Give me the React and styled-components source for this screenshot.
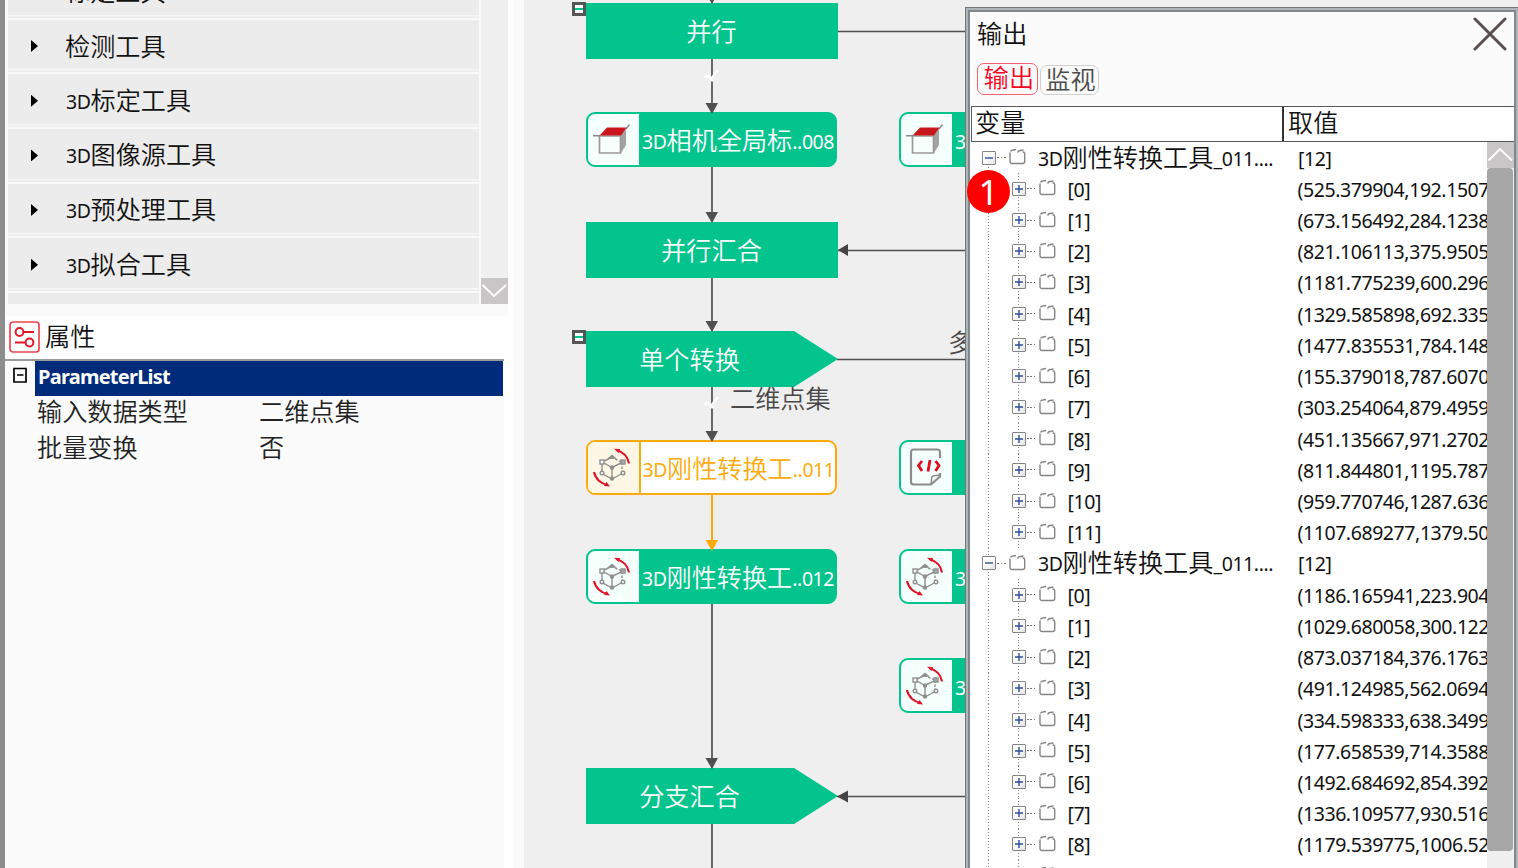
import React from "react";
import styled, { createGlobalStyle, css } from "styled-components";

const GREEN = "#03c48d";
const AMBER = "#fdab0c";
const LINE = "#505050";

const GlobalStyle = createGlobalStyle`
  * { box-sizing: border-box; }
  body {
    margin: 0;
    overflow: hidden;
    font-family: "Noto Sans", "Noto Sans CJK SC", sans-serif;
    color: #111;
  }
`;

const Page = styled.div`
  position: relative;
  display: flex;
  width: 1518px;
  height: 868px;
  overflow: hidden;
  background: #fff;
`;

/* ---------- text ---------- */

const TextLine = styled.span`
  display: block;
  margin: ${(p) => (p.$pure ? "-3px 0 0 -1px" : "-4px 0 0")};
  font-family: "Noto Sans CJK SC", sans-serif;
  font-size: 25.15px;
  font-weight: 350;
  line-height: 30px;
  white-space: nowrap;
`;

const Latin = styled.span`
  font-family: "Noto Sans", sans-serif;
  font-size: 19.5px;
  font-weight: 400;
  letter-spacing: -0.42px;
`;

const InlineLatin = styled(Latin)`
  vertical-align: 1px;
  line-height: 1;
`;

function Mixed({ children }) {
  const parts = children.split(/([\x20-\x7e]+)/).filter(Boolean);
  const isLatin = (p) => /^[\x20-\x7e]/.test(p);
  return (
    <TextLine $pure={!parts.some(isLatin)}>
      {parts.map((p, i) => (isLatin(p) ? <InlineLatin key={i}>{p}</InlineLatin> : p))}
    </TextLine>
  );
}

/* ---------- left side ---------- */

const Side = styled.aside`
  display: flex;
  flex-direction: column;
  width: 513px;
  height: 868px;
  border-left: 5px solid #8d8d8d;
  background: #fff;
`;

const ToolArea = styled.div`
  display: flex;
  width: 503px;
  height: 316px;
  padding: 0 0 12px 3px;
  background: #fafafa;
`;

const ToolList = styled.ul`
  display: flex;
  flex-direction: column;
  justify-content: flex-end;
  width: 471px;
  height: 304px;
  margin: 0;
  padding: 0;
  list-style: none;
  overflow: hidden;
  background: #ececec;
`;

const ToolItem = styled.li`
  display: flex;
  flex: none;
  align-items: center;
  height: 54.65px;
  padding: 0 0 0 23px;
  gap: 28px;
  border-bottom: 2px solid #f9f9f9;
  box-shadow: inset 0 -1.5px 0 #ececec, inset 0 -3px 0 #f7f7f7;
`;

const ListTail = styled.li`
  flex: none;
  height: 11px;
`;

const Caret = styled.i`
  width: 7px;
  height: 12px;
  background: #000;
  clip-path: polygon(0 0, 100% 50%, 0 100%);
`;

const ToolScroll = styled.div`
  display: flex;
  flex-direction: column;
  justify-content: flex-end;
  width: 27px;
  margin-left: 2px;
  background: #f0f0f0;
`;

const ScrollButton = styled.div`
  display: grid;
  place-items: center;
  width: 27px;
  height: 26px;
  background: #c8c6c7;
`;

const PropTitle = styled.header`
  display: flex;
  align-items: center;
  height: 43px;
  padding: 0 0 2px 4px;
  gap: 6px;
`;

const PropGrid = styled.section`
  flex: 1;
  width: 499px;
  padding-left: 2px;
  border-top: 2px solid #9a9a9a;
  background: #fbfbfb;
`;

const GroupRow = styled.div`
  display: flex;
  height: 35px;
`;

const GroupToggle = styled.div`
  width: 28px;
  padding: 5px 0 0 6px;
`;

const GroupName = styled.div`
  width: 468px;
  height: 35px;
  padding-left: 3px;
  background: #002b7a;
  color: #fff;
  font-size: 20px;
  font-weight: 700;
  letter-spacing: -0.75px;
  line-height: 32px;
`;

const PropRow = styled.div`
  display: grid;
  grid-template-columns: 222px 1fr;
  align-items: center;
  height: 35.5px;
  padding: 0 0 4px 31px;
  color: #222;
`;

const Gutter = styled.div`
  width: 11px;
  background: #fafafa;
`;

/* ---------- flow chart ---------- */

const Canvas = styled.main`
  position: relative;
  flex: 1;
  overflow: hidden;
  background: #efefef;
`;

const Edges = styled.svg`
  position: absolute;
  inset: 0;
`;

const placed = css`
  position: absolute;
  left: ${(p) => p.$x}px;
  top: ${(p) => p.$y}px;
`;

const Block = styled.div`
  ${placed}
  display: grid;
  place-items: center;
  width: 252px;
  height: 56px;
  padding: 1px ${(p) => (p.$arrow ? 44 : 0)}px 0 0;
  background: ${GREEN};
  color: #fff;
  clip-path: ${(p) => (p.$arrow ? "polygon(0 0, 208px 0, 100% 50%, 208px 100%, 0 100%)" : "none")};
`;

const Node = styled.div`
  ${placed}
  display: flex;
  width: 251px;
  height: 55px;
  overflow: hidden;
  border: 2px solid ${(p) => (p.$active ? AMBER : GREEN)};
  border-radius: 9px;
  background: ${(p) => (p.$active ? "#fff" : GREEN)};
  color: ${(p) => (p.$active ? AMBER : "#fff")};
`;

const NodeIcon = styled.div`
  display: grid;
  flex: none;
  place-items: center;
  width: ${(p) => (p.$active ? 53 : 51)}px;
  padding-right: 3px;
  border-right: ${(p) => (p.$active ? `2px solid ${AMBER}` : "none")};
  background: ${(p) => (p.$active ? "#fff7e6" : "#f5fffc")};
`;

const NodeLabel = styled.div`
  display: flex;
  align-items: center;
  padding: 3px 0 0 ${(p) => (p.$active ? 1.5 : 3)}px;
`;

const EdgeLabel = styled.div`
  ${placed}
  color: #484848;
`;

const Collapse = styled.div`
  ${placed}
  width: 14px;
  height: 14px;
  border: 3px solid #555;
  background: linear-gradient(#fff 3px, ${GREEN} 3px, ${GREEN} 5px, #fff 5px);
`;

/* ---------- output window ---------- */

const Window = styled.section`
  position: absolute;
  left: 965px;
  top: 7px;
  display: flex;
  flex-direction: column;
  width: 553px;
  height: 880px;
  padding: 5px 4px 0 6px;
  background: #fff;
  box-shadow: inset 1px 1px 0 #737777, inset 3px 3px 0 #aeb6b9, inset -2px 0 0 #aeb6b9,
    inset 5px 5px 0 #7f888b, inset -4px 0 0 #7f888b;
`;

const WindowHead = styled.header`
  display: flex;
  flex-direction: column;
  height: 94px;
  padding-left: 6px;
  background: #fbfbfb;
`;

const TitleBar = styled.div`
  display: flex;
  justify-content: space-between;
  height: 50px;
  padding: 5px 7px 0 1px;
`;

const WindowTitle = styled.div`
  padding-top: 3px;
`;

const Tabs = styled.div`
  display: flex;
  align-items: flex-end;
  height: 33px;
  gap: 2px;
`;

const Tab = styled.button`
  display: grid;
  place-items: center;
  width: ${(p) => (p.$on ? 61 : 59)}px;
  height: ${(p) => (p.$on ? 32 : 30)}px;
  padding: 0 0 ${(p) => (p.$on ? 3 : 8)}px ${(p) => (p.$on ? 4 : 3)}px;
  border: 1.5px solid ${(p) => (p.$on ? "#f2626d" : "#cfcfcf")};
  border-radius: 7px;
  background: transparent;
  color: ${(p) => (p.$on ? "#f8051f" : "#4c4c4c")};
`;

const TableHead = styled.div`
  display: grid;
  grid-template-columns: 312px 1fr;
  height: 36px;
  border: solid #585858;
  border-width: 1.5px 0 1.5px 1px;
`;

const HeadCell = styled.div`
  padding: 2px 0 0 ${(p) => (p.$divider ? 4 : 5)}px;
  border-right: ${(p) => (p.$divider ? "2px solid #333" : "none")};
`;

const TableBody = styled.div`
  display: flex;
  height: 740px;
`;

const Rows = styled.div`
  width: 516px;
  overflow: hidden;
`;

const Row = styled.div`
  display: flex;
  align-items: center;
  height: 31.22px;
  white-space: nowrap;
`;

const guide = css`
  background: repeating-linear-gradient(#888 0 1px, transparent 1px 3px) 17px 0 / 1px 100% no-repeat;
`;

const Indent = styled.div`
  flex: none;
  align-self: stretch;
  width: 30px;
  ${guide}
`;

const Branch = styled.div`
  display: flex;
  flex: none;
  align-items: center;
  align-self: stretch;
  width: ${(p) => (p.$root ? 67 : 66.5)}px;
  padding-left: 10.5px;
  ${guide}
  ${(p) => p.$first && "background-position: 17px 16px;"}
`;

const Expander = styled.i`
  display: grid;
  flex: none;
  place-items: center;
  width: 14px;
  height: 14px;
  border: 1px solid #858585;
  border-radius: 1px;
  background: linear-gradient(135deg, #fff 40%, #e2e2e2);
`;

const Dots = styled.i`
  width: 9px;
  height: 1px;
  margin: 0 3.5px 0 1px;
  background: repeating-linear-gradient(90deg, #777 0 1.5px, transparent 1.5px 3.5px);
`;

const NameCell = styled.div`
  flex: none;
  width: ${(p) => (p.$root ? 260 : 230)}px;
`;

const ItemText = styled(Latin)`
  display: block;
  padding-top: 2px;
  line-height: 30px;
`;

const ScrollTrack = styled.div`
  width: 27px;
  background: #f0f0f0;
`;

const Thumb = styled.div`
  width: 26px;
  height: 683px;
  border-radius: 4px;
  background: #a6a6a6;
`;

const Badge = styled.div`
  position: absolute;
  left: 967px;
  top: 170px;
  display: grid;
  place-items: center;
  width: 43px;
  height: 43px;
  border-radius: 50%;
  background: #fe0000;
  color: #fff;
  font-family: "Noto Sans", sans-serif;
  font-size: 35px;
  line-height: 43px;
`;

/* ---------- icons ---------- */

const BoxIcon = () => (
  <svg width="40" height="36" viewBox="0 -1 40 36" fill="none">
    <path d="M28 13l6-8v17l-5 8z" fill="#a3a3a3" />
    <path d="M7.500 13H28.500V30H7.500z" fill="#f7fffd" stroke="#9a9a9a" strokeWidth="1.700" />
    <path d="M1 12.800H8M34 6l3.500-4.500" stroke="#8b8b8b" strokeWidth="1.400" />
    <path d="M7.500 12.500L15 4.500H34.500L29 12.500z" fill="#c9161d" />
  </svg>
);

const RigidIcon = () => (
  <svg width="40" height="40" viewBox="0 1 40 40" fill="none">
    <g stroke="#8f8f8f" strokeWidth="1.400">
      <path d="M19.500 10.500L10 15V26.500L20 32L31 26M12 16l8 4.500 10-5M20 20.500V31" />
      <path d="M19.500 10.500L30 15V25" strokeDasharray="2.500 1.500" />
      <rect x="8" y="13" width="4" height="4" fill="#f7fffd" />
      <rect x="29" y="13" width="4" height="4" fill="#aaa" />
      <circle cx="10" cy="26" r="1.800" fill="#f7fffd" />
      <circle cx="31" cy="26" r="1.800" fill="#f7fffd" />
      <circle cx="20" cy="20.500" r="1.600" fill="#8f8f8f" />
      <circle cx="20" cy="31.500" r="1.500" fill="#8f8f8f" />
      <path d="M17 11l3-2.500 3 2.500z" fill="#8f8f8f" />
    </g>
    <g stroke="#e01426" strokeWidth="2.100">
      <path d="M25 3.200C31 5 36 10 37 16.500" />
      <path d="M2 25C3.500 32 9 37 16 38" />
    </g>
    <path d="M22 1.800l6 .2-1.500 4zM18 39.500l-6-.5 2.500-4z" fill="#e01426" />
  </svg>
);

const CodeIcon = () => (
  <svg width="36" height="40" viewBox="-1 1 36 40" fill="none">
    <path
      d="M32 11V5a2.500 2.500 0 0 0-2.500-2.500H5.500A2.500 2.500 0 0 0 3 5V35a2.500 2.500 0 0 0 2.500 2.500H23L32 29.500V26"
      stroke="#8c8c8c"
      strokeWidth="2.200"
    />
    <path d="M23 37c1-3 0-5 1-7s5-1 8-2" stroke="#8c8c8c" strokeWidth="1.600" />
    <path d="M14 14l-3.500 4.500L14 24M27.500 14l3.500 4.500-3.500 5.500M22 13l-2 11.500" stroke="#e00d20" strokeWidth="2.800" />
  </svg>
);

const SettingsIcon = () => (
  <svg width="31" height="32" viewBox="0 0 31 32" fill="none">
    <rect x="1" y="1" width="29" height="30" rx="3" stroke="#ee4450" strokeWidth="1.700" />
    <g stroke="#e3172a" strokeWidth="2">
      <circle cx="10.500" cy="11" r="3.900" />
      <path d="M14.500 11H25M6 21.500h10.500" />
      <circle cx="20.500" cy="21.500" r="3.900" />
    </g>
  </svg>
);

const FolderSvg = styled.svg`
  flex: none;
  margin-bottom: 2px;
`;

const FolderIcon = () => (
  <FolderSvg width="17" height="17" viewBox="0 0 17 17" fill="none">
    <path
      d="M13.500 4h.5a1.700 1.700 0 0 1 1.700 1.700V13.500a2 2 0 0 1-2 2H3a2 2 0 0 1-2-2V4.500"
      stroke="#858585"
      strokeWidth="1.400"
    />
    <path d="M1.500 3.500C2 2.200 3 2 4 2L7 1.500M8.500 4.500L10 2.700 14.500 2" stroke="#858585" strokeWidth="1.400" />
  </FolderSvg>
);

const CloseIcon = () => (
  <svg width="34" height="34" viewBox="0 0 34 34" fill="none">
    <path d="M2 2L32 32M32 2L2 32" stroke="#594f4f" strokeWidth="3" strokeLinecap="round" />
  </svg>
);

const Chevron = ({ up }) => (
  <svg width="27" height="26" viewBox="0 0 27 26" fill="none">
    <path d={up ? "M1.500 18.500L13 7L25 18.500" : "M1.500 7L13 18L25 7"} stroke="#fff" strokeWidth="1.900" />
  </svg>
);

const MinusBox = () => (
  <svg width="15" height="16" viewBox="0 0 15 16" fill="none">
    <path d="M1 1.500H13V15H1zM4 8H10.500" stroke="#000" strokeWidth="1.700" />
  </svg>
);

const Sign = ({ plus }) => (
  <svg width="8" height="8" viewBox="0 0 8 8">
    <path d={plus ? "M0 4H8M4 0V8" : "M0 4H8"} stroke="#2e4d9b" strokeWidth="1.400" />
  </svg>
);

/* ---------- data ---------- */

const TOOLS = ["标定工具", "检测工具", "3D标定工具", "3D图像源工具", "3D预处理工具", "3D拟合工具"];

const GROUPS = [
  [
    "(525.379904,192.1507", "(673.156492,284.1238", "(821.106113,375.9505", "(1181.775239,600.296",
    "(1329.585898,692.335", "(1477.835531,784.148", "(155.379018,787.6070", "(303.254064,879.4959",
    "(451.135667,971.2702", "(811.844801,1195.787", "(959.770746,1287.636", "(1107.689277,1379.50",
  ],
  [
    "(1186.165941,223.904", "(1029.680058,300.122", "(873.037184,376.1763", "(491.124985,562.0694",
    "(334.598333,638.3499", "(177.658539,714.3588", "(1492.684692,854.392", "(1336.109577,930.516",
    "(1179.539775,1006.52", "(797.615204,1192.390",
  ],
];

const ARROWS = [[3, LINE], [113, LINE], [222, LINE], [331, LINE], [441, LINE], [550, AMBER], [768, LINE]];

function TreeGroup({ values, first }) {
  return (
    <>
      <Row>
        <Branch $root $first={first}>
          <Expander><Sign /></Expander>
          <Dots />
          <FolderIcon />
        </Branch>
        <NameCell $root><Mixed>3D刚性转换工具_011....</Mixed></NameCell>
        <ItemText>[12]</ItemText>
      </Row>
      {values.map((v, i) => (
        <Row key={v}>
          <Indent />
          <Branch>
            <Expander><Sign plus /></Expander>
            <Dots />
            <FolderIcon />
          </Branch>
          <NameCell><ItemText>[{i}]</ItemText></NameCell>
          <ItemText>{v}</ItemText>
        </Row>
      ))}
    </>
  );
}

function ToolNode({ x, y, icon, label, active }) {
  return (
    <Node $x={x} $y={y} $active={active}>
      <NodeIcon $active={active}>{icon}</NodeIcon>
      <NodeLabel $active={active}><Mixed>{label}</Mixed></NodeLabel>
    </Node>
  );
}

export default function App() {
  return (
    <Page>
      <GlobalStyle />
      <Side>
        <ToolArea>
          <ToolList>
            {TOOLS.map((t) => (
              <ToolItem key={t}><Caret /><Mixed>{t}</Mixed></ToolItem>
            ))}
            <ListTail />
          </ToolList>
          <ToolScroll><ScrollButton><Chevron /></ScrollButton></ToolScroll>
        </ToolArea>
        <PropTitle><SettingsIcon /><Mixed>属性</Mixed></PropTitle>
        <PropGrid>
          <GroupRow>
            <GroupToggle><MinusBox /></GroupToggle>
            <GroupName>ParameterList</GroupName>
          </GroupRow>
          <PropRow><Mixed>输入数据类型</Mixed><Mixed>二维点集</Mixed></PropRow>
          <PropRow><Mixed>批量变换</Mixed><Mixed>否</Mixed></PropRow>
        </PropGrid>
      </Side>
      <Gutter />
      <Canvas>
        <Edges width="994" height="868" fill="none">
          <path
            d="M188 0V441M188 604V868M313 31.500H441M313 250.500H441M313 359.500H441M313 796.500H441"
            stroke={LINE}
            strokeWidth="1.700"
          />
          <path d="M188 495V550" stroke={AMBER} strokeWidth="2" />
        </Edges>
        <Block $x={62} $y={3}><Mixed>并行</Mixed></Block>
        <Block $x={62} $y={222}><Mixed>并行汇合</Mixed></Block>
        <Block $x={62} $y={331} $arrow><Mixed>单个转换</Mixed></Block>
        <Block $x={62} $y={768} $arrow><Mixed>分支汇合</Mixed></Block>
        <Collapse $x={48} $y={2} />
        <Collapse $x={48} $y={330} />
        <ToolNode x={62} y={112} icon={<BoxIcon />} label="3D相机全局标..008" />
        <ToolNode x={62} y={440} icon={<RigidIcon />} label="3D刚性转换工..011" active />
        <ToolNode x={62} y={549} icon={<RigidIcon />} label="3D刚性转换工..012" />
        <ToolNode x={375} y={112} icon={<BoxIcon />} label="3D" />
        <ToolNode x={375} y={440} icon={<CodeIcon />} label="" />
        <ToolNode x={375} y={549} icon={<RigidIcon />} label="3D" />
        <ToolNode x={375} y={658} icon={<RigidIcon />} label="3D" />
        <EdgeLabel $x={207} $y={385}><Mixed>二维点集</Mixed></EdgeLabel>
        <EdgeLabel $x={425} $y={329}><Mixed>多</Mixed></EdgeLabel>
        <Edges width="994" height="868" fill="none">
          {ARROWS.map(([y, c]) => (
            <path key={y} d={`M181.500 ${y - 10}H194L188 ${y + 1}z`} fill={c} />
          ))}
          <path d="M314 250l10-6v12zM313 796.500l11-6v12z" fill="#444" />
          <path d="M180 77l4-1 5 5M187 79l7-9M180 404l4-1 5 5M187 406l7-9" stroke="#fff" strokeWidth="2.500" />
        </Edges>
      </Canvas>
      <Window>
        <WindowHead>
          <TitleBar><WindowTitle><Mixed>输出</Mixed></WindowTitle><CloseIcon /></TitleBar>
          <Tabs>
            <Tab $on><Mixed>输出</Mixed></Tab>
            <Tab><Mixed>监视</Mixed></Tab>
          </Tabs>
        </WindowHead>
        <TableHead>
          <HeadCell $divider><Mixed>变量</Mixed></HeadCell>
          <HeadCell><Mixed>取值</Mixed></HeadCell>
        </TableHead>
        <TableBody>
          <Rows>
            {GROUPS.map((g, i) => <TreeGroup key={g[0]} values={g} first={i === 0} />)}
          </Rows>
          <ScrollTrack>
            <ScrollButton><Chevron up /></ScrollButton>
            <Thumb />
          </ScrollTrack>
        </TableBody>
      </Window>
      <Badge>1</Badge>
    </Page>
  );
}
